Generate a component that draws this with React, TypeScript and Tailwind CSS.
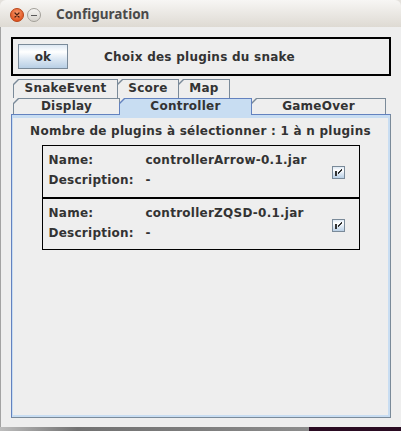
import React from "react";

function CloseBtn() {
  return (
    <svg width="14" height="14" viewBox="0 0 14 14" className="block">
      <defs>
        <radialGradient id="cg" cx="50%" cy="35%" r="65%">
          <stop offset="0%" stopColor="#f99a6e" />
          <stop offset="100%" stopColor="#dd4c17" />
        </radialGradient>
      </defs>
      <circle cx="7" cy="7" r="6.5" fill="url(#cg)" stroke="#b9471c" strokeWidth="1" />
      <path d="M5 5 L9 9 M9 5 L5 9" stroke="#4a2010" strokeWidth="1.2" strokeLinecap="round" />
    </svg>
  );
}

function MinBtn() {
  return (
    <svg width="14" height="14" viewBox="0 0 14 14" className="block">
      <defs>
        <linearGradient id="mg" x1="0" y1="0" x2="0" y2="1">
          <stop offset="0%" stopColor="#f7f6f4" />
          <stop offset="100%" stopColor="#d6d3cd" />
        </linearGradient>
      </defs>
      <circle cx="7" cy="7" r="6.5" fill="url(#mg)" stroke="#a29f99" strokeWidth="1" />
      <path d="M4 7.5 L10 7.5" stroke="#5a5a5a" strokeWidth="1.1" />
    </svg>
  );
}

function Check() {
  return (
    <div className="w-[13px] h-[13px] border border-[#7a8a99] bg-[linear-gradient(to_bottom,#dde8f3_0%,#ffffff_30%,#dde8f3_60%,#b8cfe5_100%)] relative">
      <svg width="13" height="13" viewBox="0 0 13 13" className="absolute left-[-1px] top-[-1px]" shapeRendering="crispEdges">
        <rect x="3" y="5" width="2" height="5" fill="#333333" />
        <path d="M9.5 3.5 L5.5 7.5 M9.5 4.5 L5.5 8.5" stroke="#333333" strokeWidth="1" />
      </svg>
    </div>
  );
}

function Tab({
  outer,
  inner,
  label,
}: {
  outer: string;
  inner: string;
  label: string;
}) {
  return (
    <div className={outer}>
      <div className={inner}>{label}</div>
    </div>
  );
}

const clip = "[clip-path:polygon(5px_0,100%_0,100%_100%,0_100%,0_5px)]";

function Plugin({ name, h }: { name: string; h: string }) {
  return (
    <div className={`border border-black ${h} flex items-start pl-[6px] pt-[4px]`}>
      <div className="flex-1 flex flex-col">
        <div className="flex leading-[20px]">
          <span className="w-[97px]">Name:</span>
          <span>{name}</span>
        </div>
        <div className="flex leading-[20px]">
          <span className="w-[97px]">Description:</span>
          <span>-</span>
        </div>
      </div>
      <div className="mt-[16px] mr-[14px]">
        <Check />
      </div>
    </div>
  );
}

export default function App() {
  return (
    <div className="w-[401px] h-[431px] overflow-hidden bg-[#e4e1dc] flex flex-col font-['DejaVu_Sans',sans-serif] text-[12px] font-bold tracking-[0.25px] text-[#333333]">
      <div className="h-[427px] shrink-0 flex flex-col rounded-t-[6px] overflow-hidden">
        <div className="h-[27px] shrink-0 flex items-start pt-[8px] pl-[10px] bg-[linear-gradient(to_bottom,#f7f6f4,#dedad3)]">
          <CloseBtn />
          <div className="ml-[3px]">
            <MinBtn />
          </div>
          <span className="ml-[15px] mt-[-2px] font-['Noto_Sans',sans-serif] font-bold text-[13.5px] leading-[16px] tracking-normal text-[#4a4a4a]">
            Configuration
          </span>
        </div>
        <div className="flex-1 flex flex-col bg-[#eeeeee] border-l border-[#a3a3a3] px-[10px] pt-[10px]">
          <div className="h-[39px] border-2 border-black flex items-center pl-[5px]">
            <div className="w-[50px] h-[25px] border border-[#7a8a99] bg-[linear-gradient(to_bottom,#dde8f3_0%,#ffffff_30%,#dde8f3_60%,#b8cfe5_100%)] flex items-center justify-center">
              ok
            </div>
            <span className="ml-[36px]">Choix des plugins du snake</span>
          </div>
          <div className="mt-[3px] flex flex-col">
            <div className="flex pl-[2px]">
              <Tab
                outer={`w-[105px] h-[19px] bg-[#7a8a99] pt-px px-px ${clip}`}
                inner={`h-full bg-[#eeeeee] flex justify-center pt-px leading-[14px] ${clip}`}
                label="SnakeEvent"
              />
              <Tab
                outer={`-ml-px w-[62px] h-[19px] bg-[#7a8a99] pt-px px-px ${clip}`}
                inner={`h-full bg-[#eeeeee] flex justify-center pt-px leading-[14px] ${clip}`}
                label="Score"
              />
              <Tab
                outer={`-ml-px w-[52px] h-[19px] bg-[#7a8a99] pt-px px-px ${clip}`}
                inner={`h-full bg-[#eeeeee] flex justify-center pt-px leading-[14px] ${clip}`}
                label="Map"
              />
            </div>
            <div className="flex pl-[2px] items-start">
              <Tab
                outer={`w-[107px] h-[16px] bg-[#7a8a99] pt-px px-px ${clip}`}
                inner={`h-full bg-[#eeeeee] flex justify-center leading-[14px] ${clip}`}
                label="Display"
              />
              <Tab
                outer={`-ml-px w-[133px] h-[17px] -mb-px relative z-10 bg-[#6382bf] pt-px px-px ${clip}`}
                inner={`h-full bg-[#c8ddf2] flex justify-center leading-[14px] ${clip}`}
                label="Controller"
              />
              <Tab
                outer={`-ml-px w-[135px] h-[16px] bg-[#7a8a99] pt-px px-px ${clip}`}
                inner={`h-full bg-[#eeeeee] flex justify-center leading-[14px] ${clip}`}
                label="GameOver"
              />
            </div>
            <div className="h-[304px] flex border border-[#6382bf] border-r-[#7a8a99] border-b-[#7a8a99] bg-[#c8ddf2] pt-[3px] pl-px pr-[2px] pb-[2px]">
              <div className="flex-1 bg-[#eeeeee] flex flex-col items-center">
                <div className="mt-[3px] leading-[20px]">
                  Nombre de plugins à sélectionner : 1 à n plugins
                </div>
                <div className="mt-[4px] w-[318px] flex flex-col">
                  <Plugin name="controllerArrow-0.1.jar" h="h-[53px]" />
                  <Plugin name="controllerZQSD-0.1.jar" h="h-[52px]" />
                </div>
              </div>
            </div>
          </div>
        </div>
      </div>
      <div className="h-[4px] shrink-0 flex">
        <div className="w-[309px] bg-[linear-gradient(to_right,#bdbdbd,#727272_25%,#7c7c7c_60%,#8c8c8c)]" />
        <div className="flex-1 bg-[#2a0b22]" />
      </div>
    </div>
  );
}
